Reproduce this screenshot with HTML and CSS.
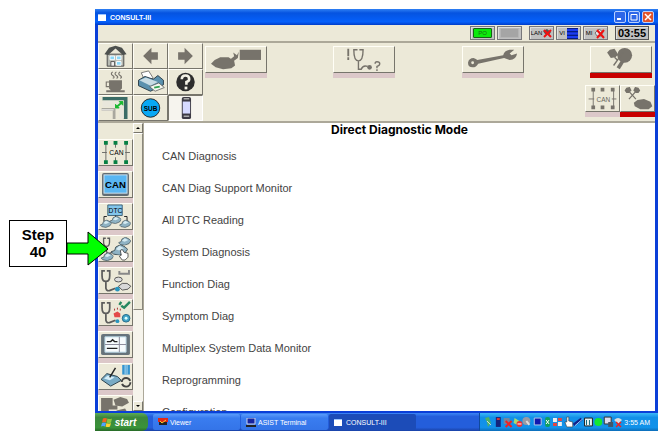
FILE: index.html
```html
<!DOCTYPE html>
<html lang="en">
<head>
    <meta charset="UTF-8">
    <meta name="viewport" content="width=device-width, initial-scale=1.0">
    <title>CONSULT-III</title>
    <link rel="stylesheet" href="styles.css">
</head>
<body>
    <!-- shapes used by several icons -->
    <svg class="defs" width="0" height="0" aria-hidden="true">
        <defs>
            <symbol id="scope" viewBox="0 0 18 26">
                <path d="M5 3H2V8Q2 14 6 14Q10 14 10 8V3H7M6 14V21Q7 25 11 23L16 21" fill="none" stroke="currentColor" stroke-width="1.8"/>
            </symbol>
            <symbol id="car" viewBox="0 0 14 9">
                <path d="M0 6L3 5L4 2L8 0L12 2L14 4L12 7L7 9L2 8Z" fill="#8fb3c4" stroke="#3e5058" stroke-width=".8"/>
                <path d="M4 4L7 1L11 3L7 5Z" fill="#d6ebf2"/>
            </symbol>
            <symbol id="flags" viewBox="0 0 20 16">
                <path d="M5 4L14 14M15 4L6 14" stroke="#77736b" stroke-width="1.4"/>
                <path d="M1 4L3 1L7 0L9 4L6 7L3 7ZM19 4L17 1L13 0L11 4L14 7L17 7Z" fill="#77736b"/>
            </symbol>
        </defs>
    </svg>

    <div class="desktop">
        <main class="window">
            <div class="titlebar">
                <span class="app-icon"></span>
                <span class="title">CONSULT-III</span>
                <button class="win-btn" aria-label="Minimize"><svg viewBox="0 0 10 10"><path d="M2 7H6" stroke="#fff" stroke-width="2"/></svg></button>
                <button class="win-btn" aria-label="Maximize"><svg viewBox="0 0 10 10"><path d="M2 2.5H8V8H2Z" fill="none" stroke="#fff"/></svg></button>
                <button class="win-btn close" aria-label="Close"><svg viewBox="0 0 10 10"><path d="M2 2L8 8M8 2L2 8" stroke="#fff" stroke-width="1.5"/></svg></button>
            </div>

            <div class="status">
                <span class="chip"><span class="battery">PO</span></span>
                <span class="chip"><span class="battery off"></span></span>
                <span class="chip lan">LAN<svg width="10" height="10" viewBox="0 0 10 10"><path d="M1 3L5 1L9 4L7 7L3 6Z" fill="#555"/><path d="M2 2L9 9M9 2L2 9" stroke="#f01010" stroke-width="2"/></svg></span>
                <span class="chip">VI<svg width="11" height="11" viewBox="0 0 11 11"><path d="M0 0H11V11H0Z" fill="#001060"/><path d="M0 2H11M0 5.5H11M0 9H11" stroke="#1c3cf0" stroke-width="2.4"/></svg></span>
                <span class="chip">MI<svg width="11" height="11" viewBox="0 0 11 11"><path d="M1 5L5 1L9 4L7 8L3 8Z" fill="#e4e4ec" stroke="#777"/><path d="M3 2L10 10M10 2L3 10" stroke="#f01010" stroke-width="2"/></svg></span>
                <time class="clock">03:55</time>
            </div>

            <header class="toolbar">
                <div class="tools">
                    <button aria-label="Home">
                        <svg viewBox="0 0 34 26"><path d="M8 11H26V24H8Z" fill="#b7bab2" stroke="#444"/><path d="M5 11L10 4L17 2L24 4L29 11L25 12L17 5L9 12Z" fill="#4d504e"/><path d="M11 13H16V17H11ZM18 13H23V17H18ZM18 19H23V23H18Z" fill="#8bd8f8" stroke="#fff"/><path d="M12 19H16V24H12Z" fill="#eee" stroke="#555"/></svg>
                    </button>
                    <button aria-label="Back">
                        <svg viewBox="0 0 34 26"><path d="M9 13L18 4V9H25V17H18V22Z" fill="#77736b"/></svg>
                    </button>
                    <button aria-label="Forward">
                        <svg viewBox="0 0 34 26"><path d="M25 13L16 4V9H9V17H16V22Z" fill="#77736b"/></svg>
                    </button>
                    <button aria-label="Rest">
                        <svg viewBox="0 0 34 26"><path d="M10 11H24V20L22 22H12L10 20ZM7 22H27V24H7Z" fill="#77736b"/><path d="M10 13H7V18H10M14 2Q11 4 14 6T14 9M18 2Q15 4 18 6T18 9M22 2Q19 4 22 6T22 9" fill="none" stroke="#77736b" stroke-width="1.2"/></svg>
                    </button>
                    <button aria-label="Print">
                        <svg viewBox="0 0 34 26"><path d="M7 3L15 1L20 9L11 12Z" fill="#fff" stroke="#555" stroke-width=".8"/><path d="M4 11L11 7L20 10L25 6L31 11V16L17 23L4 17Z" fill="#5b91ae" stroke="#283a44"/><path d="M5 11L12 8L25 13L17 17Z" fill="#c8dce4"/><path d="M16 18L26 14L32 19L22 23Z" fill="#f4f8f0" stroke="#555" stroke-width=".8"/><path d="M21 19L27 18" stroke="#30a050" stroke-width="2"/></svg>
                    </button>
                    <button aria-label="Help">
                        <svg viewBox="0 0 34 26"><circle cx="17" cy="13" r="10" fill="#2d2d2d"/><path d="M13 10Q13 6 17 6Q21 6 21 10Q21 12 18 13V16" fill="none" stroke="#f4f2e6" stroke-width="2.8"/><path d="M16 18H19V21H16Z" fill="#f4f2e6"/></svg>
                    </button>
                    <button aria-label="Screen size">
                        <svg viewBox="0 0 34 26"><path d="M3 1H30V25H26V5H3Z" fill="#3b6c66"/><path d="M3 5H26V24H21V12H3Z" fill="#e9e7dc"/><path d="M2 13H17V25H14V16H2Z" fill="#a9a89f"/><path d="M2 15H15" stroke="#fff"/><path d="M18 12L24 7" stroke="#18b830" stroke-width="2"/><path d="M17 9V13H21ZM21 6H25V10Z" fill="#18b830" stroke="#18b830"/></svg>
                    </button>
                    <button aria-label="Sub menu">
                        <svg viewBox="0 0 34 26"><circle cx="17" cy="13" r="10" fill="#08a8f4" stroke="#222"/><text x="17" y="16" class="sub-text">SUB</text></svg>
                    </button>
                    <button class="pressed" aria-label="Unit">
                        <svg viewBox="0 0 34 26"><rect x="13" y="1" width="10" height="24" rx="2" fill="#3c3a44"/><path d="M14 6H22V19H14Z" fill="#d6daff"/><path d="M15 3H21M15 22H21" stroke="#aaa" stroke-width="1.5"/></svg>
                    </button>
                </div>
                <div class="modes">
                    <nav class="mode-row main">
                        <button class="mode" aria-label="Vehicle">
                            <svg viewBox="0 0 62 27"><path d="M4 18L8 14L14 11L23 11L29 15L30 20L26 23L17 24L9 22Z" fill="#77736b"/><path d="M24 14L29 10L28 6L32 9L34 5L33 12L26 17Z" fill="#77736b"/><path d="M35 3H58V14H35Z" fill="#77736b"/></svg>
                        </button>
                        <button class="mode" aria-label="Diagnosis">
                            <svg viewBox="0 0 62 27"><path d="M14 2V10M14 11V14" stroke="#77736b" stroke-width="2"/><path d="M24 3H20Q20 15 25 15Q30 15 30 3H26M25 15V24H28Q30 19 35 21" fill="none" stroke="#77736b" stroke-width="1.5"/><circle cx="37" cy="22" r="2.5" fill="#77736b"/><path d="M43 18Q43 16 45 16Q48 16 48 18Q48 20 45 21V23M45 24V26" fill="none" stroke="#77736b" stroke-width="1.5"/></svg>
                        </button>
                        <button class="mode" aria-label="Maintenance">
                            <svg viewBox="0 0 62 27"><path d="M4 17Q5 12 10 12Q13 13 14 14L42 9Q43 4 49 3L54 3L49 7L51 9L57 7Q56 14 49 14L43 12L15 18Q13 22 9 22Q4 22 4 17Z" fill="#77736b"/><circle cx="9" cy="17" r="1.5" fill="#ece9d8"/></svg>
                        </button>
                        <button class="mode active" aria-label="Inspection">
                            <svg viewBox="0 0 62 27"><path d="M16 6L19 3L24 2L28 8L25 11L20 12Z" fill="#77736b"/><ellipse cx="35" cy="9" rx="8" ry="8" fill="#77736b"/><path d="M23 20L33 6M24 11L27 14" stroke="#77736b" stroke-width="1.5"/><path d="M33 15L28 23" stroke="#77736b" stroke-width="4"/></svg>
                        </button>
                    </nav>
                    <nav class="mode-row small">
                        <button class="mode" aria-label="CAN">
                            <svg viewBox="0 0 34 27"><path d="M7 3V24M29 3V24M2 14H8M27 14H32" stroke="#77736b"/><path d="M5 2H9V6H5ZM15 2H19V6H15ZM26 2H30V6H26ZM5 21H9V25H5ZM15 21H19V25H15ZM26 21H30V25H26Z" fill="#77736b"/><text x="18" y="17" class="can-text gray">CAN</text></svg>
                        </button>
                        <button class="mode active" aria-label="Direct diagnostic">
                            <svg viewBox="0 0 34 27"><use href="#flags" x="2" y="1" width="19" height="15"/><path d="M13 18L17 15L24 14L31 17L33 22L29 25L20 25L14 22Z" fill="#77736b"/></svg>
                        </button>
                    </nav>
                </div>
            </header>

            <div class="workspace">
                <aside class="sidebar">
                    <ul class="shortcuts">
                        <li><button aria-label="CAN Diagnosis">
                            <svg viewBox="0 0 34 26"><path d="M7 4V22M17 4V8M17 18V22M28 4V22M3 13H8M27 13H32" stroke="#6b6b68"/><path d="M5 1H9V5H5ZM15 1H19V5H15ZM26 1H30V5H26ZM5 21H9V25H5ZM15 21H19V25H15ZM26 21H30V25H26Z" fill="#078044"/><text x="18" y="16" class="can-text">CAN</text></svg>
                        </button></li>
                        <li><button aria-label="CAN Diag Support Monitor">
                            <svg viewBox="0 0 34 26"><rect x="3" y="1" width="28" height="24" rx="2" fill="#626c74"/><rect x="5" y="3" width="24" height="19" fill="#59b6f2" stroke="#d0e2ec"/><text x="17" y="17" class="can-text big">CAN</text></svg>
                        </button></li>
                        <li><button aria-label="All DTC Reading">
                            <svg viewBox="0 0 34 26"><path d="M9 1H24V12H9Z" fill="#82c5ec" stroke="#3f6276"/><path d="M5 18V13H8M29 18V13H26M17 12V15" fill="none" stroke="#222"/><text x="17" y="9" class="can-text">DTC</text><use href="#car" x="1" y="16" width="12" height="9"/><use href="#car" x="11" y="12" width="12" height="9"/><use href="#car" x="21" y="16" width="12" height="9"/></svg>
                        </button></li>
                        <li><button aria-label="System Diagnosis">
                            <svg viewBox="0 0 34 26"><use href="#scope" x="3" y="0" width="14" height="20"/><use href="#car" x="20" y="1" width="13" height="9"/><use href="#car" x="12" y="9" width="18" height="11"/><use href="#car" x="2" y="17" width="13" height="9"/><path d="M22 15L24 14L26 17L30 18V22L27 25H24L21 21L23 20Z" fill="#fff" stroke="#333" stroke-width=".8"/></svg>
                        </button></li>
                        <li><button aria-label="Function Diag">
                            <svg viewBox="0 0 34 26"><use href="#scope" x="1" y="0" width="18" height="26"/><path d="M21 3V6H31V2" fill="none" stroke="#888" stroke-width="2"/><ellipse cx="20" cy="12" rx="4" ry="2.5" fill="#ddd" stroke="#555"/><circle cx="19" cy="22" r="2.5" fill="#2895be"/><path d="M20 19L24 16L29 16L33 19L30 22L24 23Z" fill="#d8d8d8" stroke="#555"/></svg>
                        </button></li>
                        <li><button aria-label="Symptom Diag">
                            <svg viewBox="0 0 34 26"><use href="#scope" x="1" y="0" width="18" height="26"/><path d="M21 5L23 2M23 6L26 8L32 2" fill="none" stroke="#26875e" stroke-width="2.5"/><path d="M15 14L19 12L22 14V18H16Z" fill="#e34a4a"/><path d="M16 11V9M19 10V8M22 11V9" stroke="#a33"/><circle cx="19" cy="22" r="2" fill="#2895be"/><circle cx="28" cy="19" r="4" fill="#42a4c8" stroke="#246a88"/><circle cx="28" cy="19" r="1.5" fill="#dff"/></svg>
                        </button></li>
                        <li><button aria-label="Multiplex System Data Monitor">
                            <svg viewBox="0 0 34 26"><rect x="2" y="2" width="30" height="22" rx="2" fill="#66737b"/><path d="M6 5H28V21H6Z" fill="#f6fbfd" stroke="#b4d3e2"/><path d="M8 10H12L14 8L16 10H19M8 17H19" fill="none" stroke="#222" stroke-width="1.5"/><path d="M6 13H28M21 5V21" stroke="#889"/></svg>
                        </button></li>
                        <li><button aria-label="Reprogramming">
                            <svg viewBox="0 0 34 26"><path d="M2 16L8 10L19 13L23 17L12 23Z" fill="#79abc5" stroke="#29404c"/><path d="M5 15L9 12L16 14L11 17Z" fill="#d4edf8"/><path d="M11 14L17 4" stroke="#222" stroke-width="1.5"/><path d="M24 1H32V11H24Z" fill="#3493cf"/><path d="M27 1V11M29 1V11" stroke="#b8dff5"/><circle cx="28" cy="19" r="4.5" fill="none" stroke="#444" stroke-width="2" stroke-dasharray="12 2"/></svg>
                        </button></li>
                        <li><button aria-label="Configuration">
                            <svg viewBox="0 0 34 26"><path d="M2 2H14V10H19V14H10V18H2Z" fill="#77736b"/><path d="M15 4L22 1L29 3L31 7L24 11L17 10ZM18 15L27 13L31 20L20 24Z" fill="#77736b"/></svg>
                        </button></li>
                    </ul>
                    <div class="scrollbar">
                        <button aria-label="Scroll up"><svg viewBox="0 0 8 8"><path d="M2 5L4 3L6 5Z"/></svg></button>
                        <div class="track"><div class="thumb"></div></div>
                        <button aria-label="Scroll down"><svg viewBox="0 0 8 8"><path d="M2 3L4 5L6 3Z"/></svg></button>
                    </div>
                </aside>

                <section class="content">
                    <h1>Direct Diagnostic Mode</h1>
                    <ul class="menu">
                        <li><a href="#">CAN Diagnosis</a></li>
                        <li><a href="#">CAN Diag Support Monitor</a></li>
                        <li><a href="#">All DTC Reading</a></li>
                        <li><a href="#">System Diagnosis</a></li>
                        <li><a href="#">Function Diag</a></li>
                        <li><a href="#">Symptom Diag</a></li>
                        <li><a href="#">Multiplex System Data Monitor</a></li>
                        <li><a href="#">Reprogramming</a></li>
                        <li><a href="#">Configuration</a></li>
                    </ul>
                </section>
            </div>
        </main>

        <footer class="taskbar">
            <button class="start">
                <svg width="11" height="11" viewBox="-1 0 11 10"><path d="M1 1Q3 0 5 1L4 5Q2 4 0 5Z" fill="#f26522"/><path d="M5.5 1Q8 2 10 1L9 5Q7 6 4.500 5Z" fill="#8dc63f"/><path d="M0 5.5Q2 4.5 4 5.5L3 9Q1 8 -1 9Z" fill="#4fa3ff"/><path d="M4.5 5.5Q7 6.5 9 5.5L8 9Q6 10 3.5 9Z" fill="#ffd22e"/></svg>start
            </button>
            <div class="tasks">
                <button class="task"><svg width="10" height="8" viewBox="0 0 10 8"><path d="M0 0H10V4H0Z" fill="#e02818"/><path d="M1 4H9V7H1Z" fill="#222"/><path d="M2 3L4 5L8 2" stroke="#ffd028" fill="none"/></svg>Viewer</button>
                <button class="task"><svg width="10" height="9" viewBox="0 0 10 9"><path d="M1 0H9V6H1Z" fill="#1523a0" stroke="#cbd4e8"/><path d="M0 8H10" stroke="#222" stroke-width="2"/></svg>ASIST Terminal</button>
                <button class="task current"><span class="app-icon"></span>CONSULT-III</button>
            </div>
            <div class="tray">
                <svg viewBox="0 0 140 12">
                    <path d="M1 2L5 1L7 7L4 11L3 6Z" fill="#4db366"/><path d="M3 5L7 9" stroke="#ddd"/>
                    <path d="M12 1H17V11H12Z" fill="#14247c"/><path d="M13 2H16V4H13Z" fill="#d33"/>
                    <path d="M20 2H26V8H20Z" fill="#76859c"/><path d="M22 5L28 11M28 5L22 11" stroke="#e22" stroke-width="2"/>
                    <path d="M31 2L36 5L34 9L30 7Z" fill="#a8dc70"/><circle cx="36" cy="8" r="3" fill="#e33"/><path d="M34 8H38" stroke="#fff"/>
                    <circle cx="43" cy="5" r="4" fill="#9a9aa4"/><path d="M43 5L46 9" stroke="#ddd" stroke-width="2"/>
                    <path d="M51 2H58V9H51Z" fill="#1018b0" stroke="#bcc6e4"/>
                    <rect x="62" y="1" width="5" height="10" rx="2" fill="#10a060"/><path d="M63 4L66 8M66 4L63 8" stroke="#fff"/>
                    <path d="M70 2H74V6H70ZM75 6H79V10H75Z" fill="#eee"/><path d="M75 2H79V5H75ZM70 7H74V10H70Z" fill="#e04444"/>
                    <path d="M82 6L84 6V1H86V5L90 6V11H84Z" fill="#fff" stroke="#333" stroke-width=".6"/>
                    <path d="M91 9L99 3" stroke="#11228a" stroke-width="3"/><path d="M92 10L100 3" stroke="#9cd0ff"/>
                    <path d="M102 2H110V10H102Z" fill="#e8f4f4" stroke="#222"/><path d="M104 4V9M107 4V9" stroke="#167"/>
                    <circle cx="116" cy="6" r="4" fill="#12e832"/>
                    <path d="M122 1H129V8H122Z" fill="#dde" stroke="#333"/><path d="M126 6H131V11H126Z" fill="#456"/>
                    <path d="M132 4Q136 0 140 4L136 8Z" fill="#ddd"/><path d="M134 6L139 11M139 6L134 11" stroke="#e22" stroke-width="1.5"/>
                </svg>
                <time>3:55 AM</time>
            </div>
        </footer>
    </div>

    <div class="callout">
        <p>Step<br>40</p>
        <svg width="42" height="36" viewBox="0 0 42 36"><path d="M0 12H21V1L41 18L21 34V23H0Z" fill="#0f0" stroke="#000"/></svg>
    </div>
</body>
</html>
```

FILE: styles.css
```css
* {
    box-sizing: border-box;
}
body {
    margin: 0;
    padding: 9px 9px 9px 95px;
    height: 100vh;
    background: white;
    font-family: "Liberation Sans", Arial, sans-serif;
    position: relative;
}
button {
    padding: 0;
    border: none;
    background: none;
    font-family: inherit;
    cursor: pointer;
}
svg {
    display: block;
    flex-shrink: 0;
}
ul {
    list-style: none;
    margin: 0;
    padding: 0;
}
.defs {
    position: absolute;
}
.desktop {
    height: 100%;
    display: flex;
    flex-direction: column;
}

/* window */
.window {
    flex: 1;
    min-height: 0;
    display: flex;
    flex-direction: column;
    background: #ece9d8;
    border: solid #0a3fd8;
    border-width: 0 3px 2px;
}
.titlebar {
    height: 16px;
    margin: 0 -3px;
    padding: 0 4px 0 3px;
    display: flex;
    align-items: center;
    gap: 2px;
    background: linear-gradient(#2f80f4, #0553e0 25%, #0560fb 80%, #003cc8);
    color: white;
}
.app-icon {
    width: 8px;
    height: 7px;
    background: white;
    border-top: 1px solid #9cc4ff;
}
.title {
    flex: 1;
    padding-left: 2px;
    font-size: 7px;
    font-weight: bold;
}
.win-btn {
    width: 12px;
    height: 12px;
    border: 1px solid #b8d0ff;
    border-radius: 2px;
    background: #2c66e8;
}
.win-btn.close {
    background: #e0532c;
}
.status {
    height: 18px;
    padding: 0 6px 0 0;
    display: flex;
    align-items: center;
    justify-content: flex-end;
    gap: 2px;
    border-bottom: 2px solid #aca899;
}
.chip, .clock {
    height: 14px;
    background: #c0c0c0;
    border: 1px solid #77777a;
    box-shadow: inset 1px 1px #dedede;
}
.chip {
    width: 25px;
    display: flex;
    align-items: center;
    justify-content: center;
    gap: 2px;
    font-size: 6px;
}
.lan {
    margin-left: 5px;
    gap: 0;
}
.battery {
    width: 19px;
    height: 10px;
    background: #0bea0b;
    border: 1px solid #176217;
    border-radius: 1px;
    color: #156a15;
    line-height: 8px;
    text-align: center;
}
.battery.off {
    background: #a5a5a5;
    border-color: #b5b5b5;
}
.clock {
    width: 34px;
    margin-left: 5px;
    border-color: #555;
    font-size: 11px;
    line-height: 12px;
    font-weight: bold;
    text-align: center;
}

/* tool buttons and mode tabs */
.toolbar {
    display: flex;
    border-bottom: 2px solid #aca899;
}
.tools {
    display: grid;
    grid-template-columns: repeat(3, 35px);
    grid-auto-rows: 26px;
}
.tools button, .mode, .shortcuts button {
    background: #ece9d8;
    border: 1px solid;
    border-color: #fffef6 #77756c #77756c #fffef6;
}
.tools svg, .mode svg, .shortcuts svg {
    width: 100%;
    height: 100%;
}
.tools .pressed {
    background: #f6f4ee;
    border-color: #77756c #fff #fff #77756c;
}
.modes {
    flex: 1;
    padding: 3px 0 4px 2px;
    display: flex;
    flex-direction: column;
    justify-content: space-between;
}
.mode-row {
    display: flex;
}
.main {
    justify-content: space-between;
    padding-right: 3px;
}
.small {
    justify-content: flex-end;
}
.mode {
    width: 62px;
    height: 27px;
    margin-bottom: 5px;
    box-shadow: 0 5px #dcc8c9;
}
.small .mode {
    width: 35px;
}
.mode.active {
    box-shadow: 0 5px #c80000;
}
.sub-text, .can-text {
    font-size: 7px;
    text-anchor: middle;
}
.sub-text, .big {
    font-weight: bold;
}
.can-text.big {
    font-size: 10px;
}
.gray {
    fill: #66635c;
}

/* sidebar */
.workspace {
    flex: 1;
    min-height: 0;
    display: flex;
}
.sidebar {
    display: flex;
    border-right: 1px solid #aca899;
}
.shortcuts {
    width: 35px;
    padding-top: 16px;
    overflow: hidden;
}
.shortcuts li {
    height: 32px;
    background: #dcc8c9;
}
.shortcuts button {
    display: block;
    width: 100%;
    height: 27px;
    color: #5c5c5c;
}
.scrollbar {
    width: 10px;
    display: flex;
    flex-direction: column;
    background: #f6f4ec;
}
.scrollbar button {
    height: 10px;
    background: #ece9d8;
    border: 1px solid;
    border-color: #fff #77756c #77756c #fff;
}
.track {
    flex: 1;
}
.thumb {
    height: 66%;
    background: #ece9d8;
    border: 1px solid;
    border-color: #fff #8a877c #8a877c #fff;
}

/* content */
.content {
    flex: 1;
    background: white;
    overflow: hidden;
}
h1 {
    margin: 0;
    font-family: Inter, "Liberation Sans", sans-serif;
    font-size: 12px;
    line-height: 14px;
    text-align: center;
}
.menu {
    padding: 3px 0 0 18px;
}
.menu a {
    display: block;
    color: #444;
    font-size: 11px;
    line-height: 32px;
    text-decoration: none;
}

/* taskbar */
.taskbar {
    height: 18px;
    display: flex;
    background: linear-gradient(#3c86f4, #245edb 20%, #245edb 80%, #1941a5);
    color: white;
}
.start {
    width: 53px;
    padding-right: 6px;
    display: flex;
    align-items: center;
    justify-content: center;
    gap: 3px;
    border-radius: 0 6px 6px 0;
    background: linear-gradient(#5eac56, #3c873c 25%, #3a933a 80%, #276a27);
    color: white;
    font-size: 10px;
    font-weight: bold;
    font-style: italic;
}
.tasks {
    flex: 1;
    display: flex;
    gap: 1px;
    padding: 1px 0 1px 5px;
}
.task {
    width: 87px;
    padding-left: 5px;
    display: flex;
    align-items: center;
    gap: 2px;
    border-radius: 2px;
    background: linear-gradient(#5a9bfa, #3a7df0 25%, #3474e8);
    color: white;
    font-size: 7px;
}
.task.current {
    gap: 4px;
    background: #1c4cb8;
}
.tray {
    width: 179px;
    padding: 0 8px 0 4px;
    display: flex;
    align-items: center;
    justify-content: space-between;
    border-left: 1px solid #0f4a9c;
    background: linear-gradient(#3cb8f8, #1290e8 25%, #1192ea 80%, #0c6cb8);
    font-size: 7px;
}
.tray svg {
    width: 138px;
    height: 12px;
}

/* step callout over the window edge */
.callout {
    position: absolute;
    left: 9px;
    top: 220px;
    display: flex;
    align-items: flex-end;
}
.callout p {
    width: 58px;
    margin: 0;
    padding: 5px 0 6px;
    border: 1px solid black;
    background: white;
    font-size: 15px;
    line-height: 17px;
    font-weight: bold;
    text-align: center;
}
```
